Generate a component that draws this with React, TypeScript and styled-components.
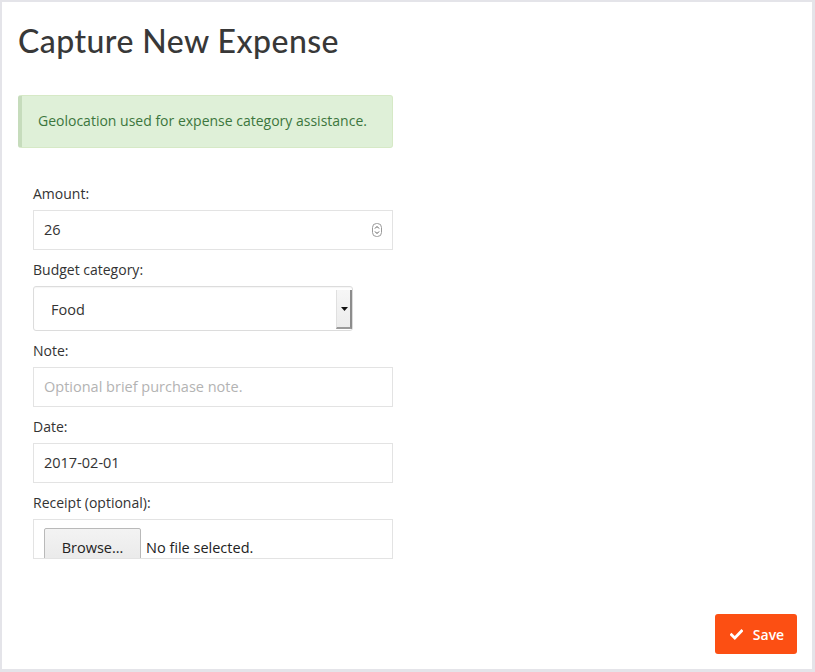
import React from "react";
import styled, { createGlobalStyle } from "styled-components";

const Global = createGlobalStyle`
  html, body { margin: 0; padding: 0; }
  body {
    background: #e4e4e9;
    font-family: "Open Sans", "Liberation Sans", sans-serif;
    font-size: 14px;
    color: #333;
  }
  * { box-sizing: border-box; }
`;

const Panel = styled.div`
  margin: 2px 3px 3px 2px;
  height: 667px;
  background: #fff;
  display: flex;
  flex-direction: column;
  padding: 0 15px 15px 16px;
`;

const Title = styled.h1`
  margin: 20px 0 0 0;
  font-family: "Lato", "Open Sans", sans-serif;
  font-weight: 500;
  font-size: 32px;
  line-height: 38px;
  color: #383838;
  letter-spacing: 0.45px;
`;

const Alert = styled.div`
  margin-top: 35px;
  width: 375px;
  background: #dff0d8;
  border: 1px solid #d6e9c6;
  border-left: 4px solid #c6dcbc;
  border-radius: 3px;
  color: #3c763d;
  padding: 15px 15px 16px 16px;
  line-height: 20px;
`;

const Form = styled.form`
  margin-top: 36px;
  padding-left: 15px;
  width: 375px;
  display: flex;
  flex-direction: column;
  gap: 10px;
`;

const Field = styled.div`
  display: flex;
  flex-direction: column;
`;

const Label = styled.label`
  line-height: 20px;
  margin-bottom: 6px;
  color: #333;
`;

const TextBox = styled.div<{ $placeholder?: boolean }>`
  height: 40px;
  width: 360px;
  border: 1px solid #e3e3e3;
  padding: 0 10px;
  display: flex;
  align-items: center;
  justify-content: space-between;
  color: ${(p) => (p.$placeholder ? "#b3b3b3" : "#333")};
  line-height: 20px;
  font-size: 14.5px;
`;

const SelectBox = styled.div`
  height: 45px;
  width: 320px;
  border: 1px solid #dcdcdc;
  border-radius: 3px;
  display: flex;
  align-items: stretch;
  box-shadow: inset 0 1px 1px rgba(0, 0, 0, 0.04);
`;

const SelectValue = styled.div`
  flex: 1;
  display: flex;
  align-items: center;
  padding-left: 17px;
  padding-top: 2px;
  font-size: 14.5px;
`;

const SelectArrow = styled.div`
  width: 16px;
  margin: 3px 0 1px 0;
  background: linear-gradient(#f6f6f6, #ececec);
  border-left: 1px solid #e0e0e0;
  border-right: 2px solid #8c8c8c;
  border-bottom: 2px solid #9a9a9a;
  display: flex;
  align-items: center;
  justify-content: center;
  padding-left: 1px;
`;

const FileBox = styled.div`
  height: 40px;
  width: 360px;
  border: 1px solid #e3e3e3;
  padding: 8px 10px 0 10px;
  overflow: hidden;
  display: flex;
  align-items: flex-start;
  gap: 5px;
`;

const BrowseButton = styled.span`
  display: block;
  flex: none;
  width: 97px;
  height: 40px;
  padding-top: 9px;
  line-height: 20px;
  text-align: center;
  border: 1px solid #b9b9b9;
  border-radius: 2px;
  background: linear-gradient(#f3f3f3, #e8e8e8);
  color: #222;
  font-size: 14.5px;
`;

const FileName = styled.span`
  display: block;
  padding-top: 10px;
  line-height: 20px;
  color: #222;
  font-size: 14.5px;
`;

const Spacer = styled.div`
  flex: 1;
`;

const Footer = styled.div`
  display: flex;
  justify-content: flex-end;
`;

const SaveButton = styled.button`
  width: 82px;
  height: 40px;
  border: none;
  border-radius: 3px;
  background: #fc4f13;
  color: #fff;
  font-family: "Open Sans", "Liberation Sans", sans-serif;
  font-size: 14px;
  font-weight: 600;
  display: flex;
  align-items: center;
  justify-content: center;
  gap: 10px;
  padding: 0 0 0 2px;
`;

const Spinner = () => (
  <svg width="10" height="14" viewBox="0 0 10 14">
    <rect x="0.5" y="0.5" width="9" height="13" rx="4" fill="#fff" stroke="#9a9a9a" />
    <path d="M3 5.5 L5 3.5 L7 5.5" fill="none" stroke="#555" strokeWidth="1" />
    <path d="M3 8.5 L5 10.5 L7 8.5" fill="none" stroke="#555" strokeWidth="1" />
  </svg>
);

const Caret = () => (
  <svg width="7" height="4" viewBox="0 0 7 4">
    <path d="M0 0 L7 0 L3.5 4 Z" fill="#111" />
  </svg>
);

const Check = () => (
  <svg width="13" height="11" viewBox="0 0 13 11">
    <path d="M1.5 5.8 L4.8 9 L11.5 2" fill="none" stroke="#fff" strokeWidth="2.8" strokeLinecap="square" />
  </svg>
);

export default function App() {
  return (
    <>
      <Global />
      <Panel>
        <Title>Capture New Expense</Title>
        <Alert>Geolocation used for expense category assistance.</Alert>
        <Form onSubmit={(e) => e.preventDefault()}>
          <Field>
            <Label>Amount:</Label>
            <TextBox>
              <span>26</span>
              <Spinner />
            </TextBox>
          </Field>
          <Field>
            <Label>Budget category:</Label>
            <SelectBox>
              <SelectValue>Food</SelectValue>
              <SelectArrow>
                <Caret />
              </SelectArrow>
            </SelectBox>
          </Field>
          <Field>
            <Label>Note:</Label>
            <TextBox $placeholder>Optional brief purchase note.</TextBox>
          </Field>
          <Field>
            <Label>Date:</Label>
            <TextBox>2017-02-01</TextBox>
          </Field>
          <Field>
            <Label>Receipt (optional):</Label>
            <FileBox>
              <BrowseButton>Browse…</BrowseButton>
              <FileName>No file selected.</FileName>
            </FileBox>
          </Field>
        </Form>
        <Spacer />
        <Footer>
          <SaveButton type="button">
            <Check />
            Save
          </SaveButton>
        </Footer>
      </Panel>
    </>
  );
}
